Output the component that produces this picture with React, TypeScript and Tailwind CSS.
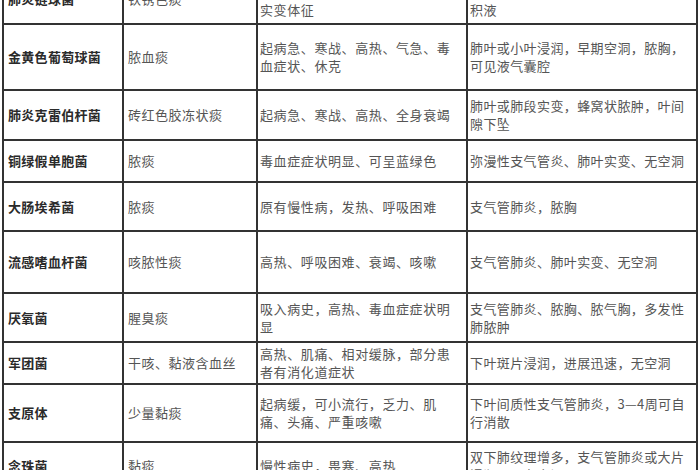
import React from "react";

type Row = { h: string; c: string[][] };

const rows: Row[] = [
  {
    h: "h-[50px]",
    c: [
      ["肺炎链球菌"],
      ["铁锈色痰"],
      ["起病急、寒战、高热、胸痛、咳", "铁锈色痰，口唇疱疹，肺", "实变体征"],
      ["肺叶或肺段实变，无空洞，可伴", "少量胸腔", "积液"],
    ],
  },
  {
    h: "h-[66px]",
    c: [
      ["金黄色葡萄球菌"],
      ["脓血痰"],
      ["起病急、寒战、高热、气急、毒", "血症状、休克"],
      ["肺叶或小叶浸润，早期空洞，脓胸，", "可见液气囊腔"],
    ],
  },
  {
    h: "h-[50px]",
    c: [
      ["肺炎克雷伯杆菌"],
      ["砖红色胶冻状痰"],
      ["起病急、寒战、高热、全身衰竭"],
      ["肺叶或肺段实变，蜂窝状脓肿，叶间", "隙下坠"],
    ],
  },
  {
    h: "h-[42px]",
    c: [
      ["铜绿假单胞菌"],
      ["脓痰"],
      ["毒血症症状明显、可呈蓝绿色"],
      ["弥漫性支气管炎、肺叶实变、无空洞"],
    ],
  },
  {
    h: "h-[49px]",
    c: [
      ["大肠埃希菌"],
      ["脓痰"],
      ["原有慢性病，发热、呼吸困难"],
      ["支气管肺炎，脓胸"],
    ],
  },
  {
    h: "h-[62px]",
    c: [
      ["流感嗜血杆菌"],
      ["咳脓性痰"],
      ["高热、呼吸困难、衰竭、咳嗽"],
      ["支气管肺炎、肺叶实变、无空洞"],
    ],
  },
  {
    h: "h-[49px]",
    c: [
      ["厌氧菌"],
      ["腥臭痰"],
      ["吸入病史，高热、毒血症症状明", "显"],
      ["支气管肺炎、脓胸、脓气胸，多发性", "肺脓肿"],
    ],
  },
  {
    h: "h-[42px]",
    c: [
      ["军团菌"],
      ["干咳、黏液含血丝"],
      ["高热、肌痛、相对缓脉，部分患", "者有消化道症状"],
      ["下叶斑片浸润，进展迅速，无空洞"],
    ],
  },
  {
    h: "h-[58px]",
    c: [
      ["支原体"],
      ["少量黏痰"],
      ["起病缓，可小流行，乏力、肌", "痛、头痛、严重咳嗽"],
      ["下叶间质性支气管肺炎，3—4周可自", "行消散"],
    ],
  },
  {
    h: "h-[48px]",
    c: [
      ["念珠菌"],
      ["黏痰"],
      ["慢性病史，畏寒、高热"],
      ["双下肺纹理增多，支气管肺炎或大片", "浸润，可有空洞"],
    ],
  },
];

const widths = ["w-[120px]", "w-[134px]", "w-[210px]", "w-[230px]"];

export default function App() {
  return (
    <div
      className="w-[700px] h-[470px] overflow-hidden bg-white pl-[2px]"
      style={{ fontFamily: '"Noto Sans CJK SC", "Noto Sans", sans-serif' }}
    >
      <div className="mt-[-25px] border-l-2 border-[#333] w-fit">
        {rows.map((r, i) => (
          <div key={i} className={`flex ${r.h}`}>
            {r.c.map((lines, j) => (
              <div
                key={j}
                className={`${widths[j]} shrink-0 border-r-2 border-b-2 border-[#333] flex flex-col whitespace-nowrap ${
                  i === 0 && j >= 2
                    ? "justify-end pb-[3px] leading-[20px]"
                    : "justify-center leading-[18px]"
                } ${
                  j === 0
                    ? "pl-[4px] text-[13px] font-semibold text-[#2a2a2a] tracking-[0.3px]"
                    : j === 1
                    ? "pl-[4px] text-[13px] text-[#555] tracking-[0.5px]"
                    : j === 2
                    ? "pl-[2px] text-[13px] text-[#555] tracking-[0.6px]"
                    : "pl-[2px] text-[13px] text-[#555] tracking-[0.4px]"
                }`}
              >
                {lines.map((l, k) => (
                  <span key={k}>{l}</span>
                ))}
              </div>
            ))}
          </div>
        ))}
      </div>
    </div>
  );
}
